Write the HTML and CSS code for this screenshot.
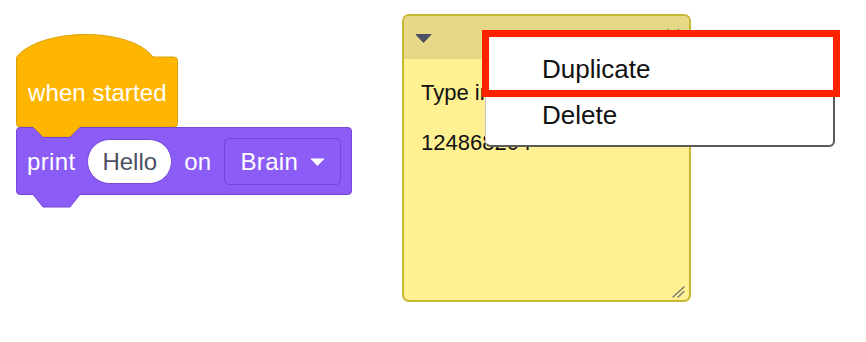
FILE: index.html
```html
<!DOCTYPE html>
<html>
<head>
<meta charset="utf-8">
<link rel="stylesheet" href="styles.css">
</head>
<body>
<div class="canvas">
  <div class="block hat">
    <svg class="shape" width="164" height="106" viewBox="0 0 164 106">
      <path d="M0.5,24 C25,-6 115,-6 137,24 L158,24 Q161.5,24 161.5,27.5 L161.5,90.5 Q161.5,94 158,94 L64,94 L54,104 L27,104 L17,94 L4,94 Q0.5,94 0.5,90.5 Z" fill="#FFB600" stroke="#D8A20C" stroke-width="1"/>
    </svg>
    <span class="label">when started</span>
  </div>

  <div class="block cmd">
    <svg class="shape" width="337" height="82" viewBox="0 0 337 82">
      <path d="M0.5,4 Q0.5,0.5 4,0.5 L17,0.5 L27,10.5 L54,10.5 L64,0.5 L332,0.5 Q335.5,0.5 335.5,4 L335.5,64 Q335.5,67.5 332,67.5 L64,67.5 L54,80 L27,80 L17,67.5 L4,67.5 Q0.5,67.5 0.5,64 Z" fill="#8C5CF6" stroke="#7548D8" stroke-width="1"/>
    </svg>
    <span class="label">print</span>
    <span class="pill">Hello</span>
    <span class="label">on</span>
    <span class="dropdown">Brain
      <svg class="caret" width="15" height="8" viewBox="0 0 15 8"><path d="M1,0.5 L14,0.5 Q14.5,0.5 14,1.2 L8.2,7.3 Q7.5,8 6.8,7.3 L1,1.2 Q0.5,0.5 1,0.5 Z" fill="#fff"/></svg>
    </span>
  </div>

  <div class="comment">
    <div class="comment-head">
      <svg class="toggle" width="17" height="9" viewBox="0 0 17 9"><path d="M1,0.5 L16,0.5 L8.5,8.5 Z" fill="#4A4F63" stroke="#4A4F63" stroke-linejoin="round"/></svg>
      <svg class="close" width="14" height="14" viewBox="0 0 14 14"><path d="M1.5,1.5 L12.5,12.5 M12.5,1.5 L1.5,12.5" stroke="#8a8a8a" stroke-width="1.6" stroke-linecap="round"/></svg>
    </div>
    <div class="comment-body">
      <div class="line">Type in a comment</div>
      <div class="line">124868204</div>
    </div>
    <svg class="grip" width="14" height="12" viewBox="0 0 14 12"><path d="M1,11 L12,1 M6,11 L12,5.5" stroke="#7a7a7a" stroke-width="1.4" stroke-linecap="round"/></svg>
  </div>

  <div class="menu">
    <div class="item">Duplicate</div>
    <div class="item">Delete</div>
  </div>
  <div class="highlight"></div>
</div>
</body>
</html>
```

FILE: styles.css
```css
html, body {
  margin: 0;
  padding: 0;
  background: #ffffff;
}
body {
  width: 866px;
  height: 342px;
  overflow: hidden;
  font-family: "Liberation Sans", Arial, sans-serif;
}
.canvas {
  position: relative;
  width: 866px;
  height: 342px;
}
.block {
  position: absolute;
  display: flex;
  align-items: center;
  gap: 12px;
}
.shape {
  position: absolute;
  left: 0;
  top: 0;
  overflow: visible;
}
.label {
  position: relative;
  color: #ffffff;
  font-size: 24px;
  letter-spacing: 0.1px;
  line-height: 26px;
}
.hat {
  left: 16px;
  top: 33px;
  width: 162px;
  height: 94px;
  box-sizing: border-box;
  padding: 47px 0 0 12px;
  align-items: flex-start;
}
.cmd {
  left: 16px;
  top: 127px;
  width: 336px;
  height: 68px;
  box-sizing: border-box;
  padding: 1px 0 0 11px;
}
.cmd .label {
  letter-spacing: 0.35px;
}
.pill {
  position: relative;
  box-sizing: border-box;
  height: 45px;
  padding: 0 14px;
  border-radius: 23px;
  background: #ffffff;
  border: 1px solid #7548D8;
  color: #4A4F63;
  font-size: 24px;
  display: flex;
  align-items: center;
}
.dropdown {
  position: relative;
  box-sizing: border-box;
  height: 47px;
  width: 117px;
  padding: 0 0 0 16px;
  border: 1px solid #7247D6;
  border-radius: 5px;
  color: #ffffff;
  font-size: 24px;
  letter-spacing: 0.3px;
  display: flex;
  align-items: center;
  gap: 12px;
}
.caret {
  display: block;
}
.comment {
  position: absolute;
  left: 402px;
  top: 14px;
  width: 289px;
  height: 288px;
  box-sizing: border-box;
  border: 2px solid #C7B733;
  border-radius: 7px;
  background: #FFF192;
  overflow: hidden;
}
.comment-head {
  position: relative;
  height: 43px;
  background: #E6D886;
  display: flex;
  align-items: center;
  justify-content: space-between;
  padding: 0 9px 0 11px;
}
.toggle {
  margin-top: 1px;
}
.close {
  margin-top: -6px;
}
.comment-body {
  padding: 21px 0 0 17px;
  display: flex;
  flex-direction: column;
  gap: 25px;
}
.line {
  font-size: 22px;
  line-height: 25px;
  color: #111111;
  white-space: nowrap;
}
.grip {
  position: absolute;
  right: 3px;
  bottom: 2px;
}
.menu {
  position: absolute;
  left: 485px;
  top: 30px;
  width: 350px;
  box-sizing: border-box;
  background: #ffffff;
  border: 1px solid #c4c4c4;
  border-right: 2px solid #5a5a5a;
  border-bottom: 2px solid #5a5a5a;
  border-radius: 0 0 6px 6px;
  padding: 15px 0 7px 0;
}
.item {
  height: 46px;
  line-height: 46px;
  padding-left: 56px;
  font-size: 26px;
  color: #111111;
}
.highlight {
  position: absolute;
  left: 482px;
  top: 30px;
  width: 358px;
  height: 67px;
  box-sizing: border-box;
  border: 7px solid #FF2200;
}
```
